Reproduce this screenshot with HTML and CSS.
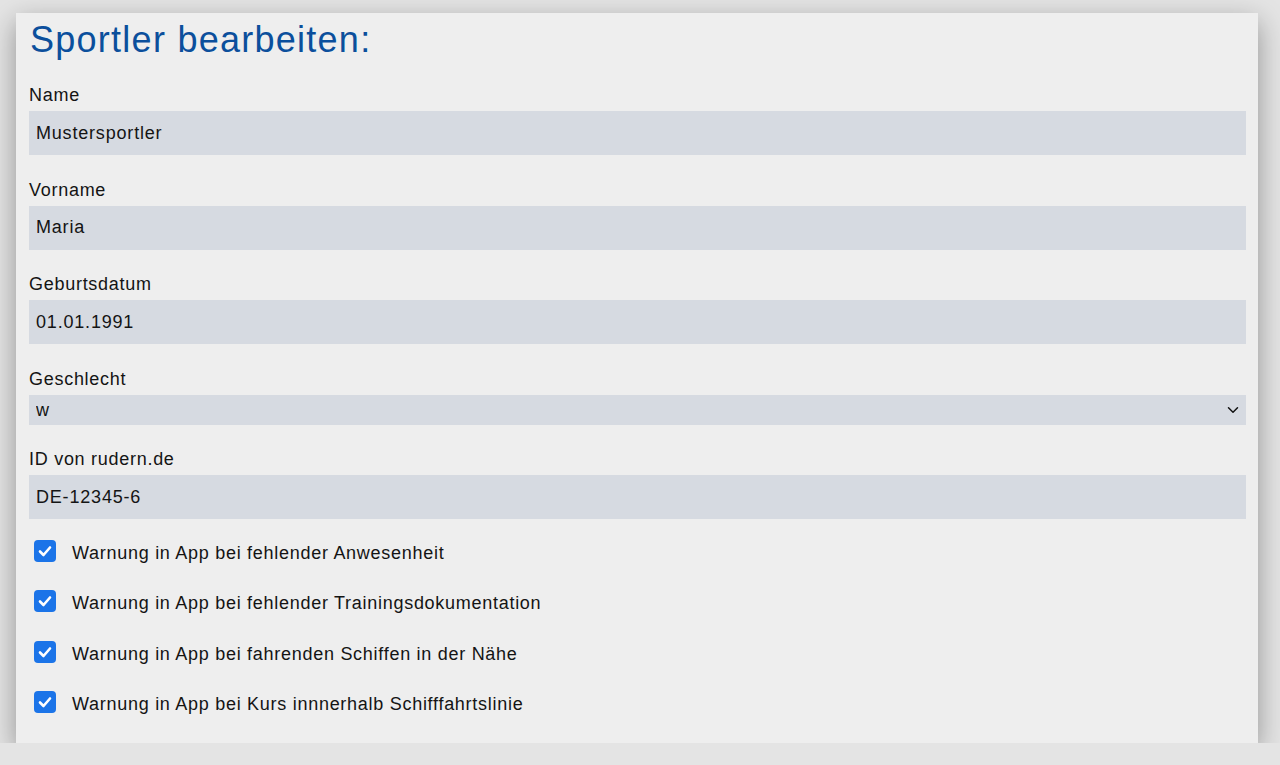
FILE: index.html
```html
<!DOCTYPE html>
<html lang="de">
  <head>
    <meta charset="UTF-8" />
    <meta name="viewport" content="width=device-width, initial-scale=1.0" />
    <title>Sportler bearbeiten</title>
    <link rel="stylesheet" href="styles.css">
  </head>
  <body>
    <div class="card">
      <h1 class="title">Sportler bearbeiten:</h1>
      <form class="form">
        <div class="field">
          <label for="name">Name</label>
          <input id="name" type="text" value="Mustersportler">
        </div>
        <div class="field">
          <label for="vorname">Vorname</label>
          <input id="vorname" type="text" value="Maria">
        </div>
        <div class="field">
          <label for="geburt">Geburtsdatum</label>
          <input id="geburt" type="text" value="01.01.1991">
        </div>
        <div class="field">
          <label for="geschlecht">Geschlecht</label>
          <div class="select-wrap">
            <select id="geschlecht">
              <option>m</option>
              <option selected>w</option>
              <option>d</option>
            </select>
            <svg class="chevron" width="12" height="8" viewBox="0 0 12 8">
              <path d="M1.5 1.8 L6 6.2 L10.5 1.8" fill="none" stroke="#111" stroke-width="1.5" stroke-linecap="round" stroke-linejoin="round"/>
            </svg>
          </div>
        </div>
        <div class="field">
          <label for="rudern">ID von rudern.de</label>
          <input id="rudern" type="text" value="DE-12345-6">
        </div>
        <div class="checks">
          <label class="check">
            <span class="box"><svg width="14" height="12" viewBox="0 0 14 12"><path d="M2 6.5 L5.5 10 L12 2.5" fill="none" stroke="#fff" stroke-width="2.6" stroke-linecap="round" stroke-linejoin="round"/></svg></span>
            <span>Warnung in App bei fehlender Anwesenheit</span>
          </label>
          <label class="check">
            <span class="box"><svg width="14" height="12" viewBox="0 0 14 12"><path d="M2 6.5 L5.5 10 L12 2.5" fill="none" stroke="#fff" stroke-width="2.6" stroke-linecap="round" stroke-linejoin="round"/></svg></span>
            <span>Warnung in App bei fehlender Trainingsdokumentation</span>
          </label>
          <label class="check">
            <span class="box"><svg width="14" height="12" viewBox="0 0 14 12"><path d="M2 6.5 L5.5 10 L12 2.5" fill="none" stroke="#fff" stroke-width="2.6" stroke-linecap="round" stroke-linejoin="round"/></svg></span>
            <span>Warnung in App bei fahrenden Schiffen in der Nähe</span>
          </label>
          <label class="check">
            <span class="box"><svg width="14" height="12" viewBox="0 0 14 12"><path d="M2 6.5 L5.5 10 L12 2.5" fill="none" stroke="#fff" stroke-width="2.6" stroke-linecap="round" stroke-linejoin="round"/></svg></span>
            <span>Warnung in App bei Kurs innnerhalb Schifffahrtslinie</span>
          </label>
        </div>
      </form>
    </div>
  </body>
</html>
```

FILE: styles.css
```css
* {
  margin: 0;
  padding: 0;
  box-sizing: border-box;
}
body {
  background: #e4e4e4;
  font-family: "Liberation Sans", Arial, sans-serif;
  color: #141414;
  letter-spacing: 0.045em;
  padding: 13px 22px 0 16px;
}
.card {
  background: #eeeeee;
  box-shadow: 0 9px 26px rgba(0, 0, 0, 0.36);
  padding: 7px 12px 15px 13px;
}
.title {
  font-size: 36px;
  font-weight: normal;
  line-height: 40px;
  letter-spacing: 0.035em;
  color: #0b4f9c;
  margin-bottom: 25px;
  padding-left: 1px;
}
.field {
  display: flex;
  flex-direction: column;
  margin-bottom: 24.5px;
}
.field label {
  font-size: 18px;
  line-height: 21px;
  margin-bottom: 5px;
}
.field input,
.field select {
  font-family: inherit;
  font-size: 18px;
  letter-spacing: 0.045em;
  color: #141414;
  background: #d6dae1;
  border: none;
  outline: none;
  height: 44px;
  padding: 0 7px;
  width: 100%;
}
.select-wrap {
  position: relative;
}
.field select {
  appearance: none;
  height: 30px;
  border-radius: 0;
}
.chevron {
  position: absolute;
  right: 7px;
  top: 11px;
}
.checks {
  margin-top: -18px;
}
.check {
  display: flex;
  align-items: center;
  gap: 16px;
  height: 50.5px;
  font-size: 18px;
  padding-left: 5px;
}
.check span:last-child {
  padding-top: 5px;
}
.box {
  width: 22px;
  height: 22px;
  border-radius: 4px;
  background: #1b74e8;
  display: flex;
  align-items: center;
  justify-content: center;
}
```
